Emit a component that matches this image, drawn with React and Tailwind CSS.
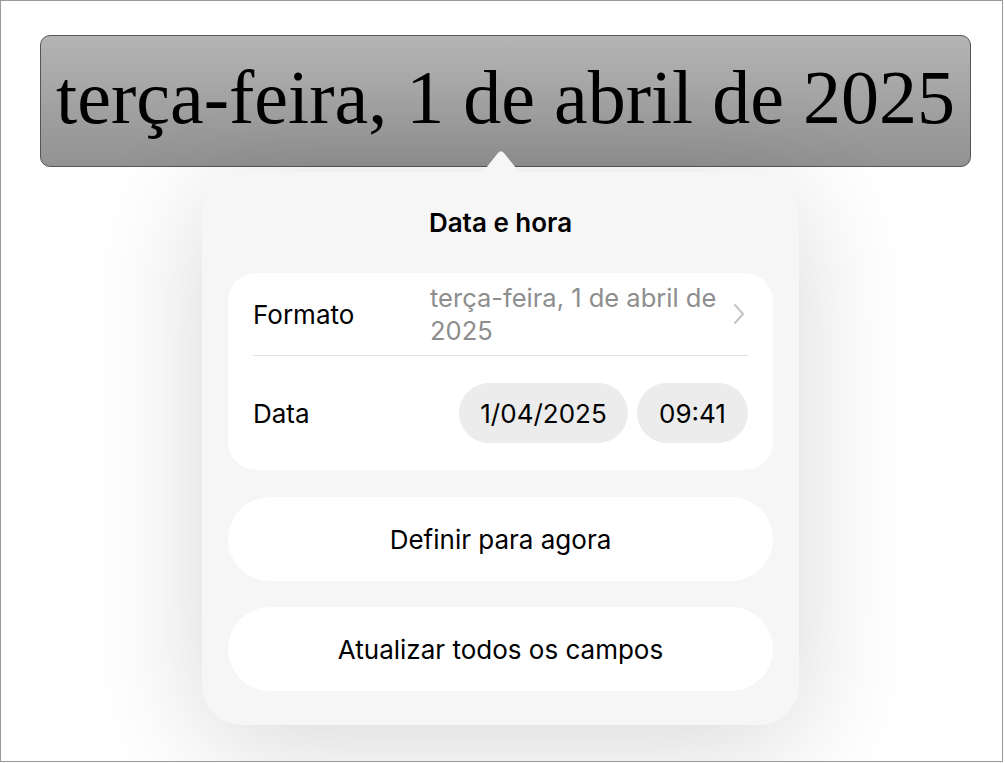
import React from "react";

const sans = { fontFamily: "Inter, 'Noto Sans', sans-serif" };

export default function App() {
  return (
    <div className="w-[1005px] h-[763px] bg-white">
      <div className="w-[1003px] h-[762px] border border-[#9a9a9a] bg-white overflow-hidden flex flex-col">
        <div
          className="ml-[39px] mt-[34px] w-[931px] h-[132px] shrink-0 rounded-[10px] border border-[#555555] bg-gradient-to-b from-[#b4b4b4] to-[#929292] flex items-center justify-center pb-[8px] text-black text-[76px] leading-none"
          style={{ fontFamily: "'Liberation Serif', 'DejaVu Serif', serif" }}
        >
          terça-feira, 1 de abril de 2025
        </div>

        <div
          className="relative ml-[201px] mt-[5px] w-[597px] h-[553px] shrink-0 rounded-[40px] bg-[#f6f6f6] shadow-[0_20px_120px_rgba(0,0,0,0.16)] px-[26px] flex flex-col"
          style={sans}
        >
          <svg
            className="absolute left-[280px] top-[-22px]"
            width="38"
            height="23"
            viewBox="0 0 38 23"
          >
            <path d="M0 23 L16 3 Q19 -0.5 22 3 L38 23 Z" fill="#f6f6f6" />
          </svg>

          <div className="h-[101px] flex items-center justify-center text-[26px] font-semibold text-black">
            Data e hora
          </div>

          <div className="bg-white rounded-[28px] px-[25px] flex flex-col">
            <div className="h-[83px] flex items-center border-b border-[#e2e2e2]">
              <div className="w-[177px] text-[26px] text-black">Formato</div>
              <div className="flex-1 text-[25.5px] leading-[33px] text-[#8e8e8e]">
                terça-feira, 1 de abril de
                <br />
                2025
              </div>
              <svg width="14" height="22" viewBox="0 0 14 22" className="mr-[2px]">
                <path
                  d="M3 2 L11 11 L3 20"
                  fill="none"
                  stroke="#c4c4c4"
                  strokeWidth="2"
                  strokeLinecap="round"
                  strokeLinejoin="round"
                />
              </svg>
            </div>
            <div className="h-[114px] flex items-center">
              <div className="flex-1 text-[26px] text-black">Data</div>
              <div className="w-[169px] h-[60px] rounded-full bg-[#ececec] flex items-center justify-center text-[26px] text-black">
                1/04/2025
              </div>
              <div className="ml-[9px] w-[111px] h-[60px] rounded-full bg-[#ececec] flex items-center justify-center text-[26px] text-black">
                09:41
              </div>
            </div>
          </div>

          <div className="mt-[27px] h-[84px] rounded-[42px] bg-white flex items-center justify-center text-[26px] text-black">
            Definir para agora
          </div>
          <div className="mt-[26px] h-[84px] rounded-[42px] bg-white flex items-center justify-center text-[26px] text-black">
            Atualizar todos os campos
          </div>
        </div>
      </div>
    </div>
  );
}
